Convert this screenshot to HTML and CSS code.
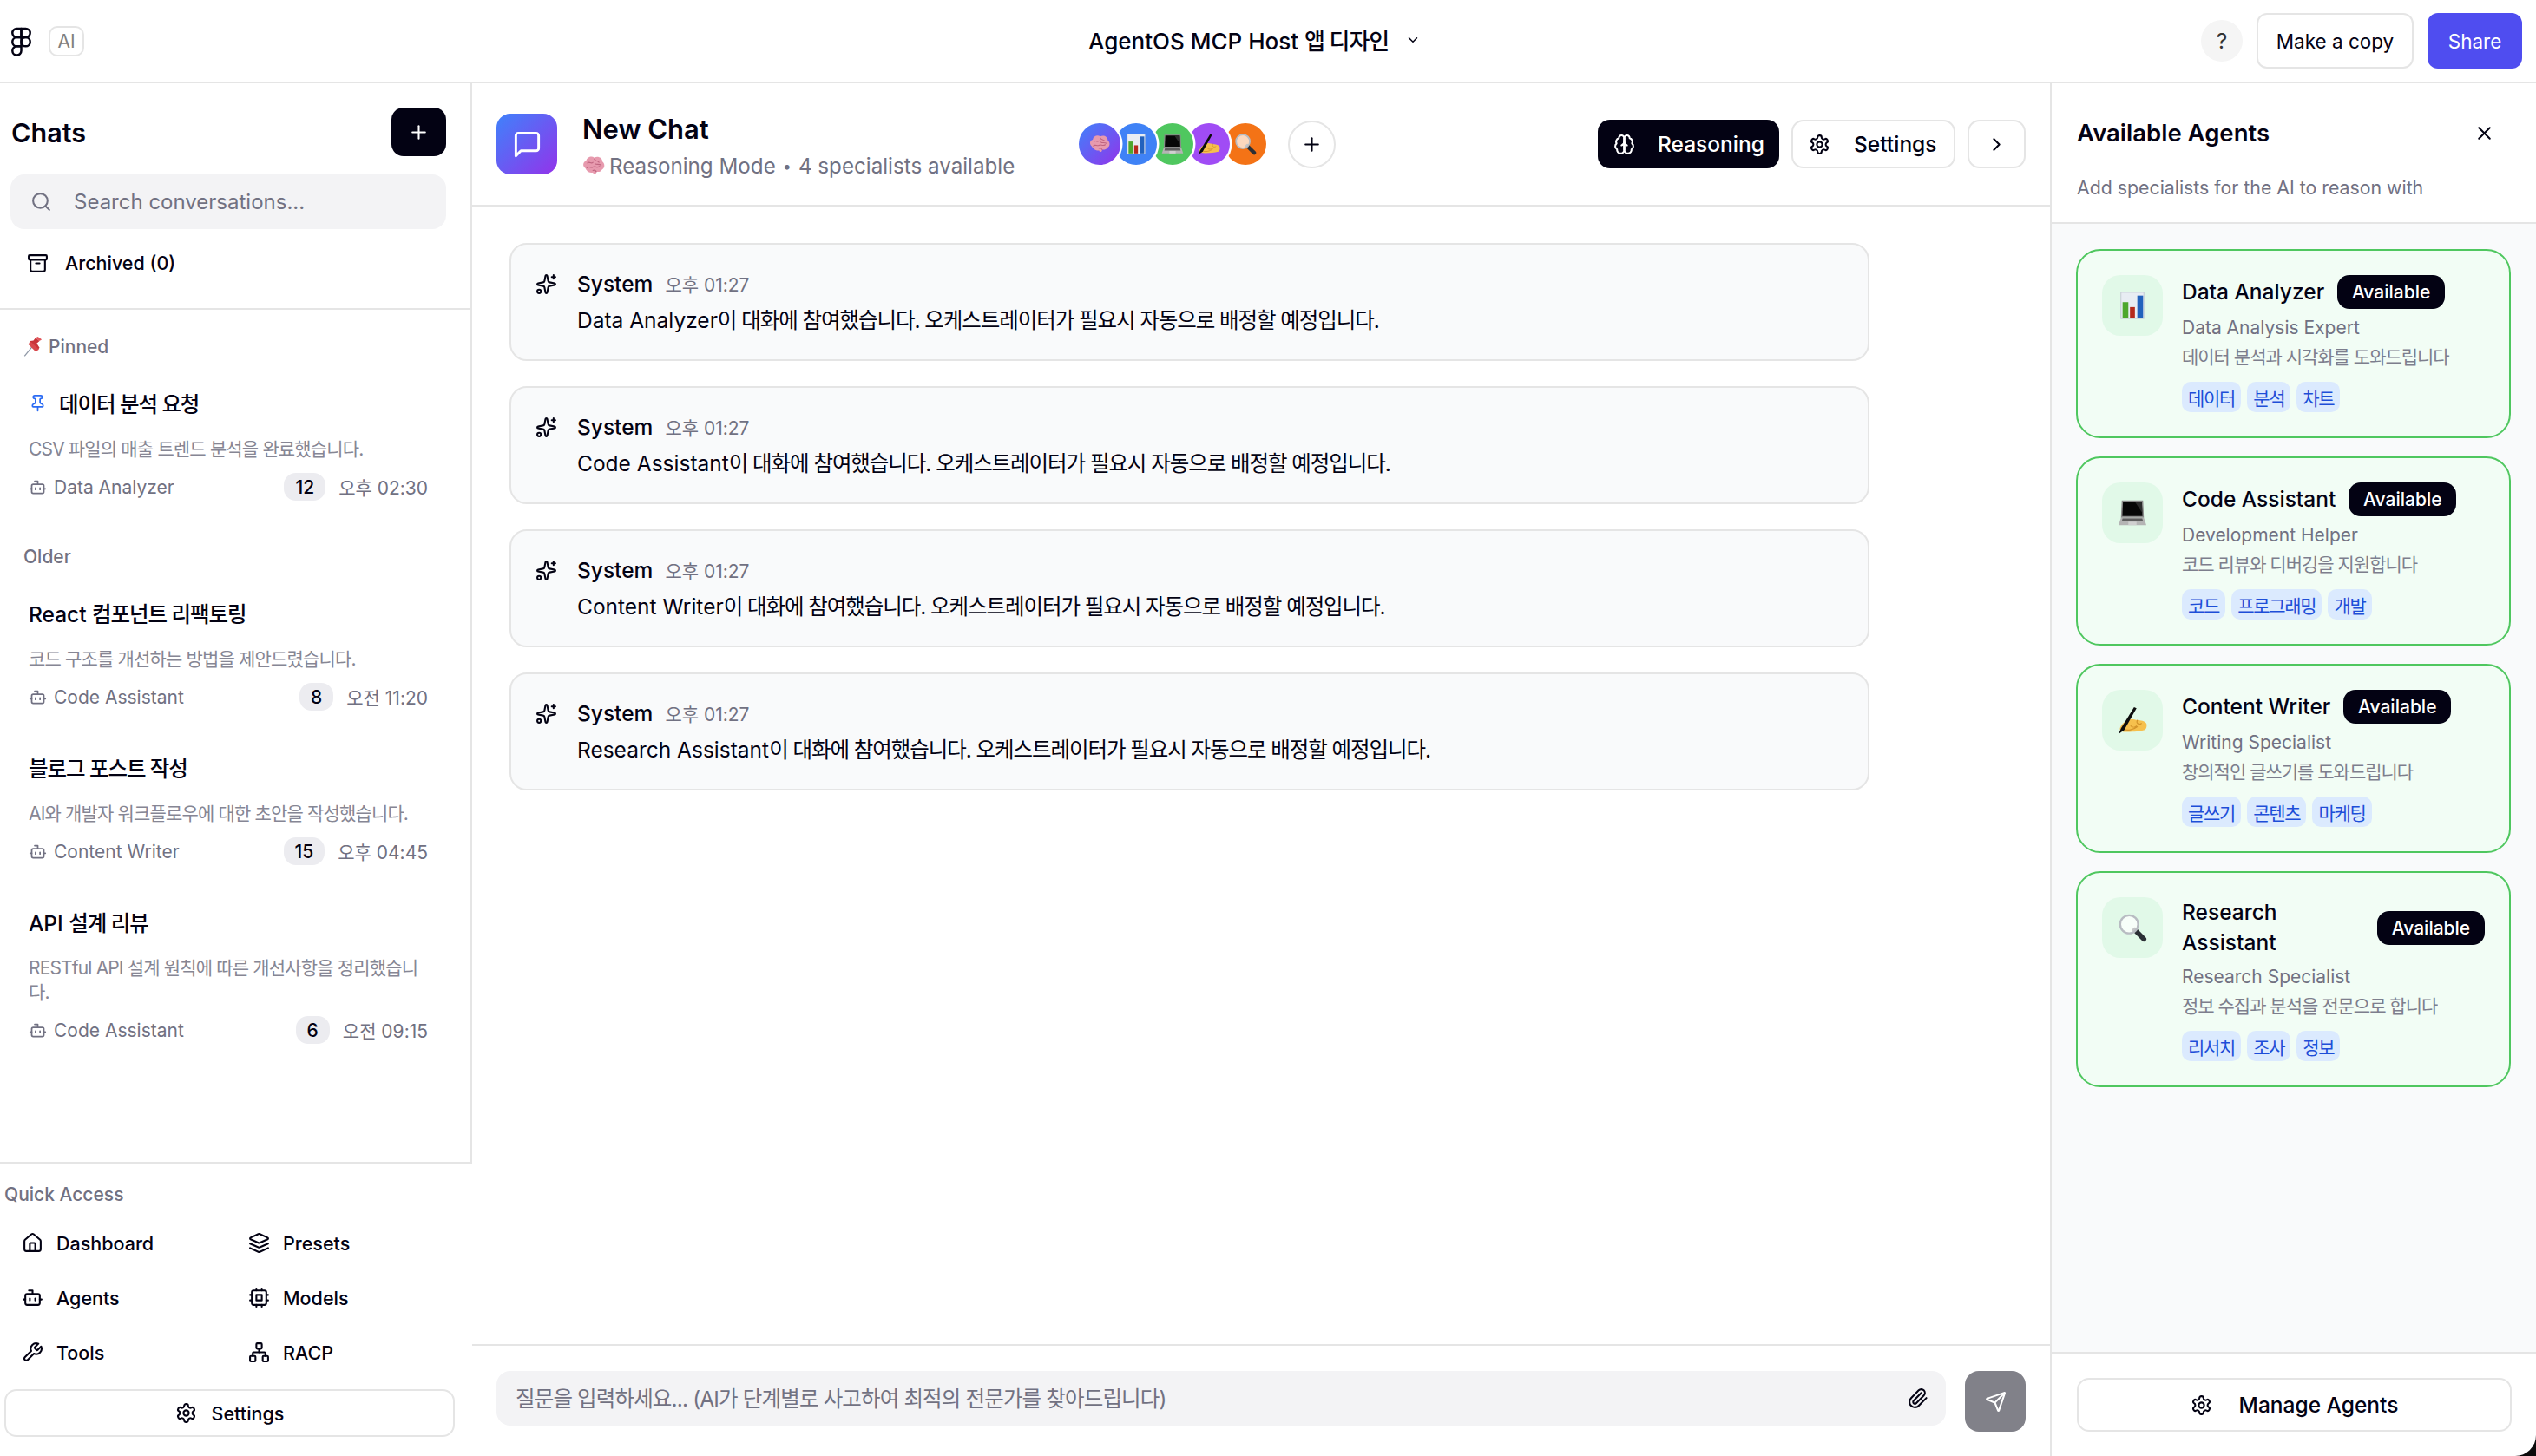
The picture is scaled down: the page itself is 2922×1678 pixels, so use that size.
FILE: index.html
```html
<!DOCTYPE html>
<html lang="ko">
<head>
    <meta charset="UTF-8">
    <meta name="viewport" content="width=device-width, initial-scale=1.0">
    <title>AgentOS MCP Host 앱 디자인</title>
    <link rel="stylesheet" href="styles.css">
</head>
<body>
    <svg class="sprites" xmlns="http://www.w3.org/2000/svg">
        <symbol id="i-figma" viewBox="0 0 24 24"><path d="M5 5.5A3.5 3.5 0 0 1 8.5 2H12v7H8.5A3.5 3.5 0 0 1 5 5.5z"/><path d="M12 2h3.5a3.5 3.5 0 1 1 0 7H12V2z"/><path d="M12 12.5a3.5 3.5 0 1 1 7 0 3.5 3.5 0 1 1-7 0z"/><path d="M5 19.5A3.5 3.5 0 0 1 8.5 16H12v3.5a3.5 3.5 0 1 1-7 0z"/><path d="M5 12.5A3.5 3.5 0 0 1 8.5 9H12v7H8.5A3.5 3.5 0 0 1 5 12.5z"/></symbol>
        <symbol id="i-plus" viewBox="0 0 24 24"><path d="M5 12h14"/><path d="M12 5v14"/></symbol>
        <symbol id="i-search" viewBox="0 0 24 24"><circle cx="11" cy="11" r="8"/><path d="m21 21-4.3-4.3"/></symbol>
        <symbol id="i-archive" viewBox="0 0 24 24"><rect x="2" y="3" width="20" height="5" rx="1"/><path d="M4 8v11a2 2 0 0 0 2 2h12a2 2 0 0 0 2-2V8"/><path d="M10 12h4"/></symbol>
        <symbol id="i-pin" viewBox="0 0 24 24"><path d="M12 17v5"/><path d="M9 10.76a2 2 0 0 1-1.11 1.79l-1.78.9A2 2 0 0 0 5 15.24V16a1 1 0 0 0 1 1h12a1 1 0 0 0 1-1v-.76a2 2 0 0 0-1.11-1.79l-1.78-.9A2 2 0 0 1 15 10.76V7a1 1 0 0 1 1-1 2 2 0 0 0 0-4H8a2 2 0 0 0 0 4 1 1 0 0 1 1 1z"/></symbol>
        <symbol id="i-bot" viewBox="0 0 24 24"><path d="M12 8V4H8"/><rect x="4" y="8" width="16" height="12" rx="2"/><path d="M2 14h2"/><path d="M20 14h2"/><path d="M15 13v2"/><path d="M9 13v2"/></symbol>
        <symbol id="i-home" viewBox="0 0 24 24"><path d="M15 21v-8a1 1 0 0 0-1-1h-4a1 1 0 0 0-1 1v8"/><path d="M3 10a2 2 0 0 1 .709-1.528l7-5.999a2 2 0 0 1 2.582 0l7 5.999A2 2 0 0 1 21 10v9a2 2 0 0 1-2 2H5a2 2 0 0 1-2-2z"/></symbol>
        <symbol id="i-layers" viewBox="0 0 24 24"><path d="m12.83 2.18a2 2 0 0 0-1.66 0L2.6 6.08a1 1 0 0 0 0 1.83l8.58 3.91a2 2 0 0 0 1.66 0l8.58-3.9a1 1 0 0 0 0-1.83Z"/><path d="m22 17.65-9.17 4.16a2 2 0 0 1-1.66 0L2 17.65"/><path d="m22 12.65-9.17 4.16a2 2 0 0 1-1.66 0L2 12.65"/></symbol>
        <symbol id="i-cpu" viewBox="0 0 24 24"><rect x="4" y="4" width="16" height="16" rx="2"/><rect x="9" y="9" width="6" height="6"/><path d="M15 2v2"/><path d="M15 20v2"/><path d="M2 15h2"/><path d="M2 9h2"/><path d="M20 15h2"/><path d="M20 9h2"/><path d="M9 2v2"/><path d="M9 20v2"/></symbol>
        <symbol id="i-wrench" viewBox="0 0 24 24"><path d="M14.7 6.3a1 1 0 0 0 0 1.4l1.6 1.6a1 1 0 0 0 1.4 0l3.77-3.77a6 6 0 0 1-7.94 7.94l-6.91 6.91a2.12 2.12 0 0 1-3-3l6.91-6.91a6 6 0 0 1 7.94-7.94l-3.76 3.76z"/></symbol>
        <symbol id="i-network" viewBox="0 0 24 24"><rect x="16" y="16" width="6" height="6" rx="1"/><rect x="2" y="16" width="6" height="6" rx="1"/><rect x="9" y="2" width="6" height="6" rx="1"/><path d="M5 16v-3a1 1 0 0 1 1-1h12a1 1 0 0 1 1 1v3"/><path d="M12 12V8"/></symbol>
        <symbol id="i-settings" viewBox="0 0 24 24"><path d="M12.22 2h-.44a2 2 0 0 0-2 2v.18a2 2 0 0 1-1 1.73l-.43.25a2 2 0 0 1-2 0l-.15-.08a2 2 0 0 0-2.73.73l-.22.38a2 2 0 0 0 .73 2.73l.15.1a2 2 0 0 1 1 1.72v.51a2 2 0 0 1-1 1.74l-.15.09a2 2 0 0 0-.73 2.73l.22.38a2 2 0 0 0 2.73.73l.15-.08a2 2 0 0 1 2 0l.43.25a2 2 0 0 1 1 1.73V20a2 2 0 0 0 2 2h.44a2 2 0 0 0 2-2v-.18a2 2 0 0 1 1-1.73l.43-.25a2 2 0 0 1 2 0l.15.08a2 2 0 0 0 2.73-.73l.22-.39a2 2 0 0 0-.73-2.73l-.15-.08a2 2 0 0 1-1-1.74v-.5a2 2 0 0 1 1-1.74l.15-.09a2 2 0 0 0 .73-2.73l-.22-.38a2 2 0 0 0-2.73-.73l-.15.08a2 2 0 0 1-2 0l-.43-.25a2 2 0 0 1-1-1.73V4a2 2 0 0 0-2-2z"/><circle cx="12" cy="12" r="3"/></symbol>
        <symbol id="i-message" viewBox="0 0 24 24"><path d="M21 15a2 2 0 0 1-2 2H7l-4 4V5a2 2 0 0 1 2-2h14a2 2 0 0 1 2 2z"/></symbol>
        <symbol id="i-brain" viewBox="0 0 24 24"><path d="M12 5a3 3 0 1 0-5.997.125 4 4 0 0 0-2.526 5.77 4 4 0 0 0 .556 6.588A4 4 0 1 0 12 18Z"/><path d="M12 5a3 3 0 1 1 5.997.125 4 4 0 0 1 2.526 5.77 4 4 0 0 1-.556 6.588A4 4 0 1 1 12 18Z"/><path d="M15 13a4.5 4.5 0 0 1-3-4 4.5 4.5 0 0 1-3 4"/><path d="M12 18V5"/></symbol>
        <symbol id="i-right" viewBox="0 0 24 24"><path d="m9 18 6-6-6-6"/></symbol>
        <symbol id="i-down" viewBox="0 0 24 24"><path d="m6 9 6 6 6-6"/></symbol>
        <symbol id="i-x" viewBox="0 0 24 24"><path d="M18 6 6 18"/><path d="m6 6 12 12"/></symbol>
        <symbol id="i-sparkles" viewBox="0 0 24 24"><path d="M11.017 2.814a1 1 0 0 1 1.966 0l1.051 5.558a2 2 0 0 0 1.594 1.594l5.558 1.051a1 1 0 0 1 0 1.966l-5.558 1.051a2 2 0 0 0-1.594 1.594l-1.051 5.558a1 1 0 0 1-1.966 0l-1.051-5.558a2 2 0 0 0-1.594-1.594l-5.558-1.051a1 1 0 0 1 0-1.966l5.558-1.051a2 2 0 0 0 1.594-1.594z"/><path d="M20 2v4"/><path d="M22 4h-4"/><circle cx="4" cy="20" r="2"/></symbol>
        <symbol id="i-clip" viewBox="0 0 24 24"><path d="m16 6-8.414 8.586a2 2 0 0 0 2.829 2.829l8.414-8.586a4 4 0 1 0-5.657-5.657l-8.379 8.551a6 6 0 1 0 8.485 8.485l8.379-8.551"/></symbol>
        <symbol id="i-send" viewBox="0 0 24 24"><path d="M14.536 21.686a.5.5 0 0 0 .937-.024l6.5-19a.496.496 0 0 0-.635-.635l-19 6.5a.5.5 0 0 0-.024.937l7.93 3.18a2 2 0 0 1 1.112 1.11z"/><path d="m21.854 2.147-10.94 10.939"/></symbol>

        <!-- emoji drawings, there is no colour emoji font here -->
        <symbol id="e-pushpin" viewBox="0 0 36 36"><path d="M2 35 15 19" stroke="#8f98a6" stroke-width="2" fill="none"/><path d="M13 11 26 24 29 20 24 12 29 8 22 2 18 7 12 8Z" fill="#c9343a"/><path d="M22 2 29 8 33 5 26 0Z" fill="#e2555a"/><path d="M9 14 12 8 28 23 22 27Z" fill="#d8484c"/></symbol>
        <symbol id="e-brain" viewBox="0 0 36 36"><path d="M6 22C1 19 2 12 7 11 8 5 15 3 19 6 24 3 31 6 31 12 35 15 35 22 30 24 28 28 24 27 22 27 22 31 18 32 17 28 13 29 9 27 8 25 7 24 6 23 6 22Z" fill="#e79aae"/><path d="M9 14C12 11 14 16 17 13M19 8C20 12 24 10 26 13M8 21C11 18 14 22 17 20 20 18 23 22 27 19M20 15C22 17 26 15 29 17M17 25C19 24 21 25 22 27" stroke="#bf6580" stroke-width="1.5" fill="none" stroke-linecap="round"/></symbol>
        <symbol id="e-chart" viewBox="0 0 36 36"><rect x="4" y="2" width="28" height="32" fill="#e8edf3"/><rect x="4" y="2" width="28" height="32" fill="none" stroke="#c3cad2" stroke-width="1"/><rect x="6" y="14" width="7" height="19" fill="#4ea72e"/><rect x="15" y="20" width="6" height="13" fill="#b52a1c"/><rect x="24" y="6" width="7" height="27" fill="#2262bd"/></symbol>
        <symbol id="e-laptop" viewBox="0 0 36 36"><path d="M5 3H31L32 24H4Z" fill="#8a8a8a"/><path d="M6.500 4.500H29.500L30.300 22H5.700Z" fill="#070707"/><path d="M21 4.500H29.500L30 18Z" fill="#2c2c2c"/><path d="M4 24H32L35 33H1Z" fill="#b4b4b4"/><path d="M6 25H30L31 28.500H5Z" fill="#5d5d5d"/><rect x="13" y="29" width="10" height="4" fill="#d0d0d0"/></symbol>
        <symbol id="e-hand" viewBox="0 0 36 36"><path d="M3 27C6 21 11 18 15 17 19 16 21 18 24 18 28 18 33 19 35 22 36 25 35 29 33 30 26 32 12 33 6 32 3 31 2 29 3 27Z" fill="#f6c04d"/><path d="M24 18C22 22 26 24 29 22M7 29C12 31 19 30 24 26M16 25C18 27 21 27 23 25" stroke="#d3932a" stroke-width="1.200" fill="none" stroke-linecap="round"/><path d="M1 35 4 28 20 2 23 3.500 8 30Z" fill="#0d0d0d"/></symbol>
        <symbol id="e-mag" viewBox="0 0 36 36"><path d="M21 21 32 32" stroke="#2b2f35" stroke-width="6" stroke-linecap="round"/><circle cx="14" cy="14" r="11" fill="#fff" fill-opacity=".72"/><circle cx="14" cy="14" r="11" fill="none" stroke="#b8bcc2" stroke-width="2.500"/></symbol>
    </svg>

    <div class="app">
        <header class="topbar">
            <div class="topbar-left">
                <svg class="icon logo"><use href="#i-figma"/></svg>
                <span class="ai-badge">AI</span>
            </div>
            <div class="doc-title">
                <span>AgentOS MCP Host <span class="ko">앱 디자인</span></span>
                <svg class="icon chevron"><use href="#i-down"/></svg>
            </div>
            <div class="topbar-right">
                <span class="help">?</span>
                <button class="top-btn">Make a copy</button>
                <button class="top-btn share">Share</button>
            </div>
        </header>

        <div class="workspace">
            <aside class="sidebar">
                <div class="sidebar-head">
                    <div class="chats-row">
                        <h2>Chats</h2>
                        <button class="new-chat"><svg class="icon"><use href="#i-plus"/></svg></button>
                    </div>
                    <label class="search">
                        <svg class="icon"><use href="#i-search"/></svg>
                        <input type="text" placeholder="Search conversations...">
                    </label>
                    <div class="archived">
                        <svg class="icon"><use href="#i-archive"/></svg>
                        <span>Archived (0)</span>
                    </div>
                </div>

                <div class="chat-list">
                    <div class="group-label pinned"><svg class="emoji"><use href="#e-pushpin"/></svg>Pinned</div>
                    <div class="chat-item">
                        <div class="chat-name"><svg class="icon pin"><use href="#i-pin"/></svg><span class="ko">데이터 분석 요청</span></div>
                        <p class="chat-desc">CSV 파일의 매출 트렌드 분석을 완료했습니다.</p>
                        <div class="chat-meta">
                            <svg class="icon"><use href="#i-bot"/></svg>
                            <span class="agent">Data Analyzer</span>
                            <span class="count">12</span>
                            <span class="time">오후 02:30</span>
                        </div>
                    </div>

                    <div class="group-label">Older</div>
                    <div class="chat-item">
                        <div class="chat-name"><span>React <span class="ko">컴포넌트 리팩토링</span></span></div>
                        <p class="chat-desc">코드 구조를 개선하는 방법을 제안드렸습니다.</p>
                        <div class="chat-meta">
                            <svg class="icon"><use href="#i-bot"/></svg>
                            <span class="agent">Code Assistant</span>
                            <span class="count">8</span>
                            <span class="time">오전 11:20</span>
                        </div>
                    </div>
                    <div class="chat-item">
                        <div class="chat-name"><span class="ko">블로그 포스트 작성</span></div>
                        <p class="chat-desc">AI와 개발자 워크플로우에 대한 초안을 작성했습니다.</p>
                        <div class="chat-meta">
                            <svg class="icon"><use href="#i-bot"/></svg>
                            <span class="agent">Content Writer</span>
                            <span class="count">15</span>
                            <span class="time">오후 04:45</span>
                        </div>
                    </div>
                    <div class="chat-item">
                        <div class="chat-name"><span>API <span class="ko">설계 리뷰</span></span></div>
                        <p class="chat-desc">RESTful API 설계 원칙에 따른 개선사항을 정리했습니다.</p>
                        <div class="chat-meta">
                            <svg class="icon"><use href="#i-bot"/></svg>
                            <span class="agent">Code Assistant</span>
                            <span class="count">6</span>
                            <span class="time">오전 09:15</span>
                        </div>
                    </div>
                </div>

                <div class="quick">
                    <div class="quick-label">Quick Access</div>
                    <div class="quick-grid">
                        <a class="quick-item"><svg class="icon"><use href="#i-home"/></svg>Dashboard</a>
                        <a class="quick-item"><svg class="icon"><use href="#i-layers"/></svg>Presets</a>
                        <a class="quick-item"><svg class="icon"><use href="#i-bot"/></svg>Agents</a>
                        <a class="quick-item"><svg class="icon"><use href="#i-cpu"/></svg>Models</a>
                        <a class="quick-item"><svg class="icon"><use href="#i-wrench"/></svg>Tools</a>
                        <a class="quick-item"><svg class="icon"><use href="#i-network"/></svg>RACP</a>
                    </div>
                    <button class="quick-settings"><svg class="icon"><use href="#i-settings"/></svg>Settings</button>
                </div>
            </aside>

            <main class="main">
                <div class="chat-header">
                    <div class="chat-icon"><svg class="icon"><use href="#i-message"/></svg></div>
                    <div class="chat-title">
                        <h1>New Chat</h1>
                        <div class="chat-mode"><svg class="emoji"><use href="#e-brain"/></svg>Reasoning Mode<span class="dot">•</span>4 specialists available</div>
                    </div>
                    <div class="avatars">
                        <span class="avatar a-brain"><svg class="emoji"><use href="#e-brain"/></svg></span>
                        <span class="avatar a-blue"><svg class="emoji"><use href="#e-chart"/></svg></span>
                        <span class="avatar a-green"><svg class="emoji"><use href="#e-laptop"/></svg></span>
                        <span class="avatar a-purple"><svg class="emoji"><use href="#e-hand"/></svg></span>
                        <span class="avatar a-orange"><svg class="emoji"><use href="#e-mag"/></svg></span>
                    </div>
                    <button class="add-agent"><svg class="icon"><use href="#i-plus"/></svg></button>
                    <div class="chat-actions">
                        <button class="action dark"><svg class="icon"><use href="#i-brain"/></svg>Reasoning</button>
                        <button class="action"><svg class="icon"><use href="#i-settings"/></svg>Settings</button>
                        <button class="action square"><svg class="icon"><use href="#i-right"/></svg></button>
                    </div>
                </div>

                <div class="messages">
                    <div class="message">
                        <div class="message-head"><svg class="icon"><use href="#i-sparkles"/></svg><b>System</b><time>오후 01:27</time></div>
                        <p>Data Analyzer<span class="ko">이 대화에 참여했습니다. 오케스트레이터가 필요시 자동으로 배정할 예정입니다.</span></p>
                    </div>
                    <div class="message">
                        <div class="message-head"><svg class="icon"><use href="#i-sparkles"/></svg><b>System</b><time>오후 01:27</time></div>
                        <p>Code Assistant<span class="ko">이 대화에 참여했습니다. 오케스트레이터가 필요시 자동으로 배정할 예정입니다.</span></p>
                    </div>
                    <div class="message">
                        <div class="message-head"><svg class="icon"><use href="#i-sparkles"/></svg><b>System</b><time>오후 01:27</time></div>
                        <p>Content Writer<span class="ko">이 대화에 참여했습니다. 오케스트레이터가 필요시 자동으로 배정할 예정입니다.</span></p>
                    </div>
                    <div class="message">
                        <div class="message-head"><svg class="icon"><use href="#i-sparkles"/></svg><b>System</b><time>오후 01:27</time></div>
                        <p>Research Assistant<span class="ko">이 대화에 참여했습니다. 오케스트레이터가 필요시 자동으로 배정할 예정입니다.</span></p>
                    </div>
                </div>

                <div class="composer">
                    <label class="composer-input">
                        <input type="text" placeholder="질문을 입력하세요... (AI가 단계별로 사고하여 최적의 전문가를 찾아드립니다)">
                        <svg class="icon"><use href="#i-clip"/></svg>
                    </label>
                    <button class="send"><svg class="icon"><use href="#i-send"/></svg></button>
                </div>
            </main>

            <aside class="agents">
                <div class="agents-head">
                    <div class="agents-title">
                        <h2>Available Agents</h2>
                        <svg class="icon"><use href="#i-x"/></svg>
                    </div>
                    <p>Add specialists for the AI to reason with</p>
                </div>

                <div class="agents-list">
                    <div class="agent-card">
                        <div class="agent-icon"><svg class="emoji"><use href="#e-chart"/></svg></div>
                        <div class="agent-body">
                            <div class="agent-head"><span class="agent-name">Data Analyzer</span><span class="pill">Available</span></div>
                            <div class="agent-role">Data Analysis Expert</div>
                            <div class="agent-desc">데이터 분석과 시각화를 도와드립니다</div>
                            <div class="tags"><span>데이터</span><span>분석</span><span>차트</span></div>
                        </div>
                    </div>
                    <div class="agent-card">
                        <div class="agent-icon"><svg class="emoji"><use href="#e-laptop"/></svg></div>
                        <div class="agent-body">
                            <div class="agent-head"><span class="agent-name">Code Assistant</span><span class="pill">Available</span></div>
                            <div class="agent-role">Development Helper</div>
                            <div class="agent-desc">코드 리뷰와 디버깅을 지원합니다</div>
                            <div class="tags"><span>코드</span><span>프로그래밍</span><span>개발</span></div>
                        </div>
                    </div>
                    <div class="agent-card">
                        <div class="agent-icon"><svg class="emoji"><use href="#e-hand"/></svg></div>
                        <div class="agent-body">
                            <div class="agent-head"><span class="agent-name">Content Writer</span><span class="pill">Available</span></div>
                            <div class="agent-role">Writing Specialist</div>
                            <div class="agent-desc">창의적인 글쓰기를 도와드립니다</div>
                            <div class="tags"><span>글쓰기</span><span>콘텐츠</span><span>마케팅</span></div>
                        </div>
                    </div>
                    <div class="agent-card">
                        <div class="agent-icon"><svg class="emoji"><use href="#e-mag"/></svg></div>
                        <div class="agent-body">
                            <div class="agent-head"><span class="agent-name">Research Assistant</span><span class="pill">Available</span></div>
                            <div class="agent-role">Research Specialist</div>
                            <div class="agent-desc">정보 수집과 분석을 전문으로 합니다</div>
                            <div class="tags"><span>리서치</span><span>조사</span><span>정보</span></div>
                        </div>
                    </div>
                </div>

                <div class="agents-foot">
                    <button class="manage"><svg class="icon"><use href="#i-settings"/></svg>Manage Agents</button>
                </div>
            </aside>
        </div>
    </div>
</body>
</html>
```

FILE: styles.css
```css
* {
    box-sizing: border-box;
}

html, body {
    margin: 0;
    height: 100%;
    background-color: #0b0b0b;
}

body {
    font-family: Inter, "Noto Sans CJK KR", sans-serif;
    font-size: 24.5px;
    color: #030213;
    overflow: hidden;
}

h1, h2, p {
    margin: 0;
}

button, input {
    font: inherit;
    color: inherit;
}

button {
    background: #fff;
    border: 2px solid #e5e5e5;
    cursor: pointer;
    padding: 0;
}

input {
    border: none;
    outline: none;
    background: none;
    padding: 0;
    width: 100%;
}

input::placeholder {
    color: #717182;
    opacity: 1;
}

.sprites {
    display: none;
}

.ko {
    letter-spacing: -.043em;
}

.icon {
    width: 25px;
    height: 25px;
    flex: none;
    fill: none;
    stroke: currentColor;
    stroke-width: 2;
    stroke-linecap: round;
    stroke-linejoin: round;
}

.emoji {
    flex: none;
    width: 30px;
    height: 30px;
}

.app {
    height: 1678px;
    background-color: #fff;
    border-bottom-right-radius: 24px;
    overflow: hidden;
    display: flex;
    flex-direction: column;
}

/* top bar */
.topbar {
    height: 96px;
    flex: none;
    display: grid;
    grid-template-columns: 1fr auto 1fr;
    align-items: center;
    padding: 0 16px 0 7px;
    border-bottom: 2px solid #e5e5e5;
}

.topbar-left {
    display: flex;
    align-items: center;
    gap: 14px;
}

.logo {
    width: 35px;
    height: 35px;
    stroke-width: 1.7;
}

.ai-badge {
    width: 41px;
    height: 35px;
    display: flex;
    align-items: center;
    justify-content: center;
    border: 2px solid #e5e5e5;
    border-radius: 10px;
    font-size: 21px;
    color: #808080;
}

.doc-title {
    display: flex;
    align-items: center;
    gap: 19px;
    padding: 0 22px 3px 0;
    font-size: 26px;
    font-weight: 500;
}

.doc-title .chevron {
    width: 18px;
    height: 18px;
}

.topbar-right {
    display: flex;
    align-items: center;
    justify-content: flex-end;
    gap: 16px;
}

.help {
    width: 48px;
    height: 48px;
    border-radius: 50%;
    background-color: #f5f5f5;
    display: flex;
    align-items: center;
    justify-content: center;
    color: #333;
}

.top-btn {
    height: 64px;
    width: 181px;
    border-radius: 12px;
    font-size: 22.5px;
}

.top-btn.share {
    width: 109px;
    background-color: #4f4df0;
    border: none;
    color: #fff;
}

.workspace {
    flex: 1;
    display: flex;
    min-height: 0;
}

/* left sidebar */
.sidebar {
    width: 544px;
    flex: none;
    display: flex;
    flex-direction: column;
}

.sidebar-head {
    padding: 28px 28px 38px 12px;
    border-right: 2px solid #e5e5e5;
    border-bottom: 2px solid #e5e5e5;
}

.chats-row {
    display: flex;
    align-items: center;
    justify-content: space-between;
}

.chats-row h2 {
    font-size: 30.5px;
    font-weight: 600;
    padding-left: 1px;
}

.new-chat {
    width: 63px;
    height: 56px;
    border: none;
    border-radius: 14px;
    background-color: #030213;
    color: #fff;
    display: flex;
    align-items: center;
    justify-content: center;
}

.search {
    height: 63px;
    margin-top: 21px;
    display: flex;
    align-items: center;
    gap: 25px;
    padding: 0 23px;
    border-radius: 16px;
    background-color: #f3f3f5;
    color: #717182;
    font-size: 24px;
}

.archived {
    height: 28px;
    margin-top: 25px;
    padding-left: 19px;
    display: flex;
    align-items: center;
    gap: 19px;
    font-size: 21.5px;
    font-weight: 500;
}

.chat-list {
    flex: 1;
    min-height: 0;
    padding: 28px 49px 0 27px;
    border-right: 2px solid #e5e5e5;
    border-bottom: 2px solid #e5e5e5;
}

.group-label {
    height: 28px;
    margin-bottom: 34px;
    display: flex;
    align-items: center;
    font-size: 21px;
    font-weight: 500;
    color: #717182;
}

.chat-item + .group-label {
    margin-top: 50px;
}

.group-label.pinned .emoji {
    width: 23px;
    height: 23px;
    margin-right: 6px;
}

.chat-item {
    padding-left: 6px;
    margin-bottom: 48px;
}

.chat-name {
    height: 34px;
    display: flex;
    align-items: center;
    font-weight: 500;
}

.chat-name .pin {
    width: 21px;
    height: 21px;
    margin: 0 14px 0 0;
    color: #2b6bf3;
}

.chat-desc {
    margin-top: 23px;
    font-size: 21px;
    line-height: 28px;
    letter-spacing: -.04em;
    color: #717182;
    opacity: .85;
}

.chat-meta {
    margin-top: 13px;
    height: 32px;
    display: flex;
    align-items: center;
    font-size: 21px;
    color: #717182;
}

.chat-meta .icon {
    width: 21px;
    height: 21px;
    margin: 0 8px 0 0;
}

.chat-meta .agent {
    flex: 1;
}

.count {
    min-width: 38px;
    height: 32px;
    padding: 0 13px;
    border-radius: 14px;
    background-color: #ececf0;
    color: #030213;
    font-weight: 500;
    display: flex;
    align-items: center;
    justify-content: center;
    margin-right: 15px;
}

.quick {
    flex: none;
    height: 337px;
    padding: 22px 20px 0 5px;
}

.quick-label {
    font-size: 21px;
    line-height: 28px;
    font-weight: 500;
    color: #717182;
}

.quick-grid {
    margin-top: 10px;
    display: grid;
    grid-template-columns: 261px 1fr;
    grid-auto-rows: 63px;
    padding-left: 20px;
}

.quick-item {
    display: flex;
    align-items: center;
    gap: 15px;
    font-size: 21.5px;
    font-weight: 500;
}

.quick-settings {
    width: 100%;
    height: 55px;
    margin-top: 11px;
    border-radius: 14px;
    display: flex;
    align-items: center;
    justify-content: center;
    gap: 17px;
    font-size: 21.5px;
    font-weight: 500;
}

/* middle column */
.main {
    flex: 1;
    min-width: 0;
    display: flex;
    flex-direction: column;
}

.chat-header {
    height: 142px;
    flex: none;
    display: flex;
    align-items: center;
    padding: 0 28px;
    border-bottom: 2px solid #e5e5e5;
}

.chat-icon {
    width: 70px;
    height: 70px;
    flex: none;
    border-radius: 16px;
    background: linear-gradient(135deg, #3f82fb, #9333ea);
    color: #fff;
    display: flex;
    align-items: center;
    justify-content: center;
    margin-right: 29px;
}

.chat-icon .icon {
    width: 35px;
    height: 35px;
}

.chat-title {
    width: 572px;
    flex: none;
    padding-top: 4px;
}

.chat-title h1 {
    font-size: 31px;
    line-height: 42px;
    font-weight: 600;
}

.chat-mode {
    margin-top: 4px;
    display: flex;
    align-items: center;
    color: #717182;
    font-size: 24.2px;
    line-height: 35px;
}

.chat-mode .emoji {
    width: 28px;
    height: 28px;
    margin: 0 4px 0 -1px;
}

.chat-mode .dot {
    margin: 0 8px;
    font-size: 18px;
}

.avatars {
    display: flex;
}

.avatar {
    width: 48px;
    height: 48px;
    border-radius: 50%;
    margin-right: -6px;
    display: flex;
    align-items: center;
    justify-content: center;
    box-shadow: 0 0 0 2.500px #fff;
    position: relative;
}

.avatar .emoji {
    width: 26px;
    height: 26px;
}

.a-brain {
    background: linear-gradient(135deg, #3f82fb, #9333ea);
    z-index: 5;
}

.a-blue {
    background-color: #3f82f6;
    z-index: 4;
}

.a-green {
    background-color: #4fc75f;
    z-index: 3;
}

.a-purple {
    background-color: #a04cf5;
    z-index: 2;
}

.a-orange {
    background-color: #f47316;
    z-index: 1;
}

.add-agent {
    width: 55px;
    height: 55px;
    margin-left: 31px;
    border-radius: 50%;
    display: flex;
    align-items: center;
    justify-content: center;
}

.chat-actions {
    margin-left: auto;
    display: flex;
    gap: 14px;
}

.action {
    height: 56px;
    width: 189px;
    border-radius: 14px;
    display: flex;
    align-items: center;
    gap: 27px;
    padding-left: 18px;
    font-weight: 500;
}

.action.dark {
    width: 209px;
    gap: 26px;
    border: none;
    background-color: #030213;
    color: #fff;
}

.action.square {
    width: 67px;
    padding: 0;
    justify-content: center;
}

.messages {
    flex: 1;
    min-height: 0;
    padding: 42px 208px 0 43px;
    display: flex;
    flex-direction: column;
    gap: 29px;
}

.message {
    height: 136px;
    padding: 30px 28px 0 28px;
    border: 2px solid #e5e5e5;
    border-radius: 20px;
    background-color: #f9fafb;
}

.message-head {
    height: 30px;
    display: flex;
    align-items: center;
}

.message-head b {
    font-weight: 500;
    margin-left: 23px;
}

.message-head time {
    margin-left: 14px;
    font-size: 21px;
    color: #717182;
}

.message p {
    margin: 10px 0 0 48px;
    line-height: 35px;
}

.composer {
    height: 129px;
    flex: none;
    padding: 29px 28px 0;
    display: flex;
    align-items: flex-start;
    gap: 22px;
    border-top: 2px solid #e5e5e5;
}

.composer-input {
    flex: 1;
    height: 63px;
    display: flex;
    align-items: center;
    gap: 16px;
    padding: 0 20px 0 22px;
    border-radius: 16px;
    background-color: #f3f3f5;
}

.composer-input input {
    letter-spacing: -.85px;
}

.send {
    width: 70px;
    height: 70px;
    flex: none;
    border: none;
    border-radius: 16px;
    background-color: #818189;
    color: #fff;
    display: flex;
    align-items: center;
    justify-content: center;
}

/* right panel */
.agents {
    width: 560px;
    flex: none;
    display: flex;
    flex-direction: column;
    border-left: 2px solid #e5e5e5;
}

.agents-head {
    height: 162px;
    flex: none;
    padding: 39px 29px 0;
    border-bottom: 2px solid #e5e5e5;
}

.agents-title {
    display: flex;
    align-items: center;
    justify-content: space-between;
    padding-right: 18px;
}

.agents-title h2 {
    font-size: 27.5px;
    line-height: 36px;
    font-weight: 600;
}

.agents-head p {
    margin-top: 31px;
    font-size: 21.3px;
    line-height: 28px;
    color: #717182;
}

.agents-list {
    flex: 1;
    min-height: 0;
    padding: 29px 29px 0 28px;
    background-color: #f9fafb;
    display: flex;
    flex-direction: column;
    gap: 21px;
}

.agent-card {
    display: flex;
    gap: 22px;
    padding: 28px;
    border: 2px solid #4fc75f;
    border-radius: 28px;
    background-color: #f2fdf5;
}

.agent-icon {
    width: 70px;
    height: 70px;
    flex: none;
    border-radius: 21px;
    background-color: #e1f9e8;
    display: flex;
    align-items: center;
    justify-content: center;
}

.agent-icon .emoji {
    width: 34px;
    height: 34px;
}

.agent-body {
    flex: 1;
    min-width: 0;
}

.agent-head {
    display: flex;
    align-items: center;
    gap: 15px;
    min-height: 39px;
}

.agent-name {
    font-weight: 500;
    line-height: 35px;
}

.pill {
    height: 39px;
    width: 124px;
    flex: none;
    border-radius: 14px;
    background-color: #030213;
    color: #fff;
    font-size: 21px;
    font-weight: 500;
    display: flex;
    align-items: center;
    justify-content: center;
}

.agent-role {
    margin-top: 8px;
    font-size: 21px;
    line-height: 28px;
    color: #717182;
}

.agent-desc {
    margin-top: 6px;
    font-size: 21px;
    line-height: 28px;
    letter-spacing: -.048em;
    color: #717182;
    opacity: .9;
}

.tags {
    margin-top: 14px;
    display: flex;
    gap: 7px;
}

.tags span {
    height: 35px;
    padding: 0 7px;
    border-radius: 10px;
    background-color: #dbeafe;
    color: #1d4ed8;
    font-size: 21px;
    letter-spacing: -.06em;
    display: flex;
    align-items: center;
}

.agents-foot {
    height: 120px;
    flex: none;
    padding: 28px 28px 0 29px;
    border-top: 2px solid #e5e5e5;
}

.manage {
    width: 100%;
    height: 62px;
    border-radius: 14px;
    display: flex;
    align-items: center;
    justify-content: center;
    gap: 31px;
    font-weight: 500;
}
```
